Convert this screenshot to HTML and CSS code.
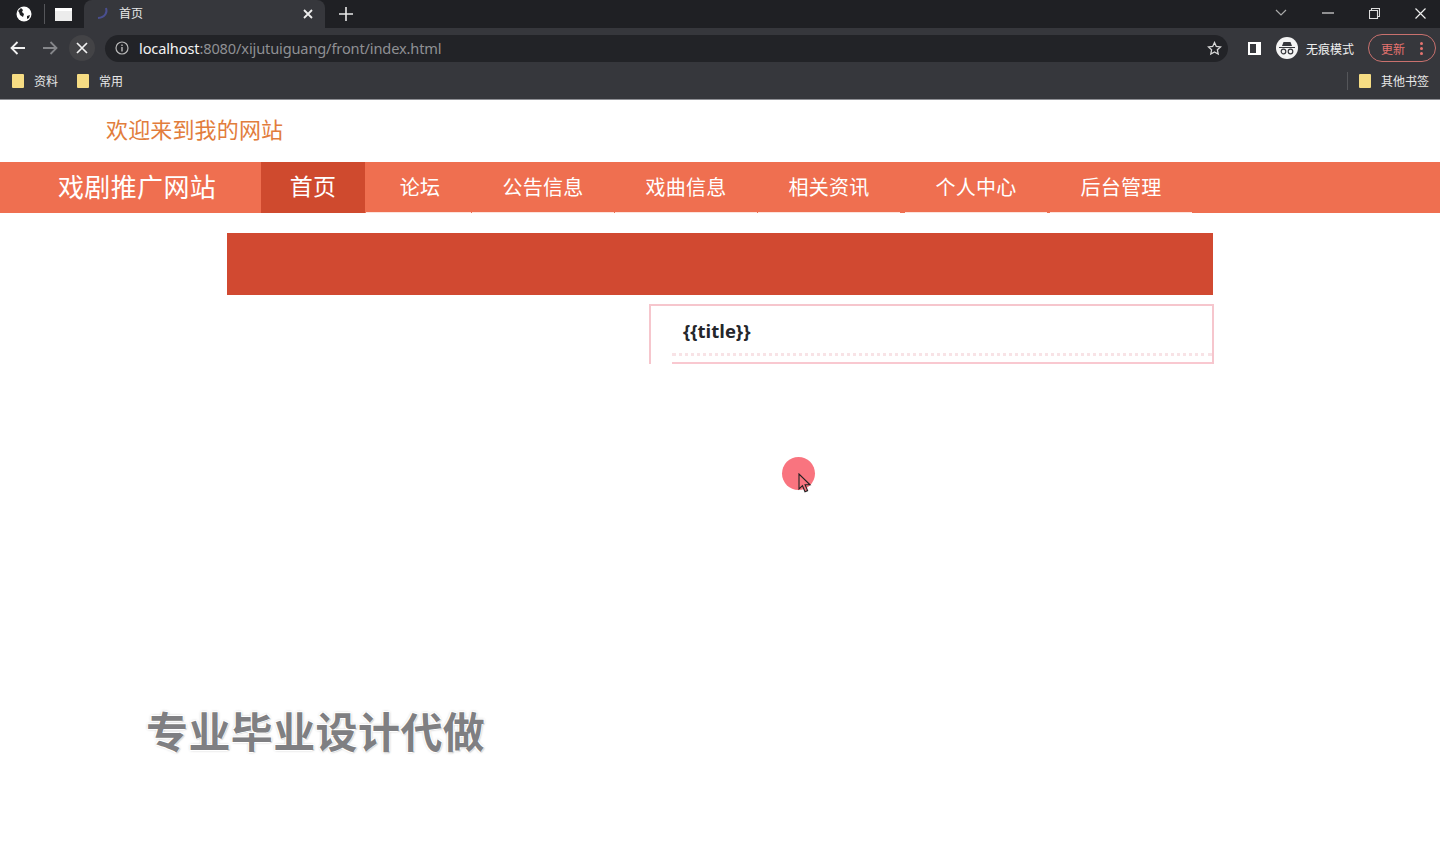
FILE: index.html
```html
<!DOCTYPE html>
<html>
<head>
    <meta charset="utf-8">
    <title>首页</title>
    <link rel="stylesheet" href="styles.css">
</head>
<body>
    <div class="browser">
        <div class="tabstrip">
            <div class="tab-group">
                <svg class="ico" width="18" height="18" viewBox="0 0 18 18"><circle cx="9" cy="9" r="7.5" fill="#fff"/><path d="M3 6l3-3 2 2-1 2 2 2-1 3-3-2-1-3zM12 11l3-1-1 3-2 1z" fill="#202124"/></svg>
                <span class="tab-sep"></span>
                <span class="window-ico"></span>
            </div>
            <div class="tab">
                <svg class="spinner" width="16" height="16" viewBox="0 0 16 16"><path d="M11 2c1.500 4-.5 9.500-8 10" fill="none" stroke="#4a4f8f" stroke-width="2"/></svg>
                <span class="tab-title">首页</span>
                <svg class="tab-close" width="10" height="10" viewBox="0 0 10 10"><path d="M1 1l8 8M9 1l-8 8" stroke="#eee" stroke-width="1.800"/></svg>
            </div>
            <svg class="new-tab" width="14" height="14" viewBox="0 0 14 14"><path d="M7 0v14M0 7h14" stroke="#e8e8e8" stroke-width="1.600"/></svg>
            <div class="window-btns">
                <svg width="12" height="8" viewBox="0 0 12 8"><path d="M1 1l5 5 5-5" fill="none" stroke="#aaa" stroke-width="1.200"/></svg>
                <svg class="win-min" width="12" height="2" viewBox="0 0 12 2"><path d="M0 1h12" stroke="#ddd" stroke-width="1.200"/></svg>
                <svg class="win-max" width="11" height="11" viewBox="0 0 11 11"><path d="M.5 2.500h8v8h-8zM2.500 2.500v-2h8v8h-2" fill="none" stroke="#ddd" stroke-width="1.100"/></svg>
                <svg class="win-close" width="11" height="11" viewBox="0 0 11 11"><path d="M.5.500l10 10M10.500.500l-10 10" stroke="#eee" stroke-width="1.200"/></svg>
            </div>
        </div>

        <div class="toolbar">
            <svg class="nav-ico" width="16" height="14" viewBox="0 0 16 14"><path d="M15 7H2M7.500 1L1.500 7l6 6" fill="none" stroke="#f1f1f1" stroke-width="1.800"/></svg>
            <svg class="nav-ico fwd" width="16" height="14" viewBox="0 0 16 14"><path d="M1 7h13M8.500 1l6 6-6 6" fill="none" stroke="#85868a" stroke-width="1.800"/></svg>
            <span class="stop-btn">
                <svg width="12" height="12" viewBox="0 0 12 12"><path d="M1 1l10 10M11 1L1 11" stroke="#f1f1f1" stroke-width="1.700"/></svg>
            </span>
            <div class="omnibox">
                <svg width="14" height="14" viewBox="0 0 14 14"><circle cx="7" cy="7" r="6" fill="none" stroke="#b8b8b8" stroke-width="1.200"/><path d="M7 6v4.500M7 3.500v1.400" stroke="#b8b8b8" stroke-width="1.400"/></svg>
                <span class="url"><b>localhost</b>:8080/xijutuiguang/front/index.html</span>
                <svg class="star" width="15" height="15" viewBox="0 0 15 15"><path d="M7.500 1.500l1.800 3.900 4.200.5-3.100 2.900.8 4.200-3.700-2.100-3.700 2.100.8-4.200L1.500 5.900l4.200-.5z" fill="none" stroke="#d8d8d8" stroke-width="1.300"/></svg>
            </div>
            <span class="panel-ico"></span>
            <div class="incognito">
                <span class="incognito-ico">
                    <svg width="16" height="14" viewBox="0 0 16 14"><path d="M3 5l1.500-4h7L13 5zM0 6h16v1H0z" fill="#36373c"/><circle cx="4.500" cy="10.500" r="2.300" fill="none" stroke="#36373c" stroke-width="1.200"/><circle cx="11.500" cy="10.500" r="2.300" fill="none" stroke="#36373c" stroke-width="1.200"/></svg>
                </span>
                <span>无痕模式</span>
            </div>
            <div class="update">
                <span>更新</span>
                <span class="dots"><i></i><i></i><i></i></span>
            </div>
        </div>

        <div class="bookmarks">
            <span class="folder"></span><span class="bm-label">资料</span>
            <span class="folder"></span><span class="bm-label">常用</span>
            <span class="bm-sep"></span>
            <span class="folder"></span><span class="bm-label last">其他书签</span>
        </div>
    </div>

    <div class="welcome">欢迎来到我的网站</div>

    <nav class="navbar">
        <a class="brand">戏剧推广网站</a>
        <a class="nav-item active">首页</a>
        <a class="nav-item forum">论坛</a>
        <a class="nav-item">公告信息</a>
        <a class="nav-item">戏曲信息</a>
        <a class="nav-item">相关资讯</a>
        <a class="nav-item wide-gap">个人中心</a>
        <a class="nav-item mid-gap">后台管理</a>
    </nav>

    <div class="content">
        <div class="banner"></div>
        <div class="news-card">
            <div class="news-title">{{title}}</div>
        </div>
    </div>

    <div class="watermark">专业毕业设计代做</div>
    <div class="click-dot"></div>
    <svg class="cursor" width="14" height="21" viewBox="0 0 14 21"><path d="M1 1v15l3.500-3.300 2.500 6 2.600-1.100-2.500-5.800H12z" fill="#f9747f" stroke="#222" stroke-width="1.100"/></svg>
</body>
</html>
```
FILE: styles.css
```css
* {
    box-sizing: border-box;
}

html, body {
    margin: 0;
    height: 864px;
    overflow: hidden;
}

body {
    position: relative;
    background-color: #fff;
    font-family: "Noto Sans CJK SC", "Liberation Sans", sans-serif;
}

/* browser chrome */
.browser {
    height: 100px;
    background-color: #36373c;
    color: #eee;
    border-bottom: 1px solid #8e8f94;
}

.tabstrip {
    display: flex;
    align-items: center;
    height: 28px;
    background-color: #1f2024;
}

.tab-group {
    display: flex;
    align-items: center;
    width: 84px;
    padding-left: 15px;
}

.tab-sep {
    width: 1px;
    height: 20px;
    margin: 0 10px 0 11px;
    background-color: #55565a;
}

.window-ico {
    width: 17px;
    height: 13px;
    background-color: #ececec;
    border-top: 3px solid #fff;
}

.tab {
    display: flex;
    align-items: center;
    width: 241px;
    height: 28px;
    padding-left: 11px;
    background-color: #36373c;
    border-radius: 8px 8px 0 0;
}

.tab-title {
    margin-left: 8px;
    margin-bottom: 3px;
    font-size: 12px;
    color: #e8e8e8;
}

.tab-close {
    margin-left: auto;
    margin-right: 12px;
    margin-bottom: 1px;
}

.new-tab {
    margin-left: 14px;
    margin-bottom: 1px;
}

.window-btns {
    display: flex;
    align-items: center;
    margin-left: auto;
    padding-right: 14px;
    margin-bottom: 2px;
}

.win-min,
.win-max,
.win-close {
    margin-left: 35px;
}

.toolbar {
    display: flex;
    align-items: center;
    height: 38px;
    padding-top: 2px;
    padding-left: 10px;
}

.nav-ico.fwd {
    margin-left: 16px;
}

.stop-btn {
    display: flex;
    align-items: center;
    justify-content: center;
    width: 26px;
    height: 26px;
    margin-left: 11px;
    background-color: #434346;
    border-radius: 50%;
}

.omnibox {
    display: flex;
    align-items: center;
    width: 1123px;
    height: 27px;
    margin-left: 10px;
    padding: 0 6px 0 10px;
    background-color: #222327;
    border-radius: 14px;
}

.url {
    margin-left: 10px;
    font-family: "Noto Sans", "Liberation Sans", sans-serif;
    font-size: 14.600px;
    letter-spacing: -0.140px;
    color: #8f9094;
}

.url b {
    font-weight: 400;
    color: #f2f2f2;
}

.star {
    margin-left: auto;
}

.panel-ico {
    width: 13px;
    height: 13px;
    margin-left: 20px;
    background-color: #36373c;
    border: 2px solid #fff;
    border-right-width: 5px;
}

.incognito {
    display: flex;
    align-items: center;
    width: 84px;
    height: 25px;
    margin-left: 15px;
    font-size: 12px;
    color: #f0f0f0;
}

.incognito-ico {
    display: flex;
    align-items: center;
    justify-content: center;
    width: 22px;
    height: 22px;
    margin-right: 8px;
    background-color: #f4f4f4;
    border-radius: 50%;
    flex: none;
}

.update {
    display: flex;
    align-items: center;
    width: 68px;
    height: 28px;
    margin-left: 8px;
    padding-left: 12px;
    font-size: 12px;
    color: #e5736f;
    border: 1px solid #c9716e;
    border-radius: 14px;
}

.dots {
    display: flex;
    flex-direction: column;
    gap: 2px;
    margin-left: 15px;
}

.dots i {
    width: 3px;
    height: 3px;
    background-color: #e5736f;
    border-radius: 50%;
}

.bookmarks {
    display: flex;
    align-items: center;
    height: 33px;
    padding-left: 12px;
    padding-bottom: 3px;
    font-size: 12px;
    color: #e8e8e8;
}

.folder {
    width: 12px;
    height: 14px;
    background-color: #f6dc83;
    border-radius: 1px;
}

.bm-label {
    width: 53px;
    padding-left: 10px;
    margin-bottom: 1px;
}

.bm-label.last {
    width: 69px;
}

.bm-sep {
    width: 1px;
    height: 18px;
    margin-left: auto;
    margin-right: 11px;
    background-color: #55565a;
}

/* page */
.welcome {
    height: 62px;
    padding-left: 106px;
    font-size: 22px;
    letter-spacing: 0.150px;
    line-height: 57px;
    color: #e27d3c;
}

.navbar {
    display: flex;
    height: 51px;
    background-color: #ef6f50;
    color: #fff;
}

.brand {
    width: 261px;
    padding-left: 58px;
    font-size: 26px;
    letter-spacing: 0.350px;
    line-height: 48px;
}

.nav-item {
    width: 142px;
    height: 51px;
    margin-left: 1px;
    font-size: 20px;
    letter-spacing: 0.200px;
    line-height: 49px;
    text-align: center;
    border-bottom: 1px solid #fde3dc;
}

.nav-item.active {
    width: 104px;
    margin-left: 0;
    font-size: 23px;
    line-height: 47px;
    background-color: #cf4a2e;
    border-bottom: none;
}

.nav-item.forum {
    width: 105px;
    padding-left: 3px;
}

.nav-item.wide-gap {
    margin-left: 5px;
}

.nav-item.mid-gap {
    margin-left: 3px;
}

.content {
    width: 987px;
    margin-left: 227px;
    padding-top: 20px;
}

.banner {
    width: 986px;
    height: 62px;
    background-color: #d14931;
}

.news-card {
    position: relative;
    width: 565px;
    height: 60px;
    margin-top: 9px;
    margin-left: 422px;
    padding: 12px 0 0 32px;
    background-color: #fff;
    border-top: 2px solid #f6c6cd;
    border-right: 2px solid #f6c6cd;
    border-left: 2px solid #f6c6cd;
}

/* bottom line starts further in than the card edge */
.news-card::after {
    content: "";
    position: absolute;
    left: 21px;
    right: 0;
    bottom: 0;
    height: 6px;
    border-top: 3px dotted #f8e3e6;
    border-bottom: 2px solid #f9c8d0;
}

.news-title {
    font-family: "Open Sans", "Noto Sans", sans-serif;
    font-size: 18.500px;
    font-weight: 700;
    color: #25262a;
}

.watermark {
    position: absolute;
    left: 146px;
    top: 699px;
    font-size: 42px;
    font-weight: 700;
    letter-spacing: 0.400px;
    line-height: 62px;
    color: #7f7f82;
    text-shadow: -1px -1px 0 #fff, 1px -1px 0 #fff, -1px 1px 0 #fff, 1px 1px 0 #ddd, 0 0 3px #999;
}

.click-dot {
    position: absolute;
    left: 782px;
    top: 457px;
    width: 33px;
    height: 33px;
    background-color: #f9747f;
    border-radius: 50%;
}

.cursor {
    position: absolute;
    left: 798px;
    top: 473px;
}
```
